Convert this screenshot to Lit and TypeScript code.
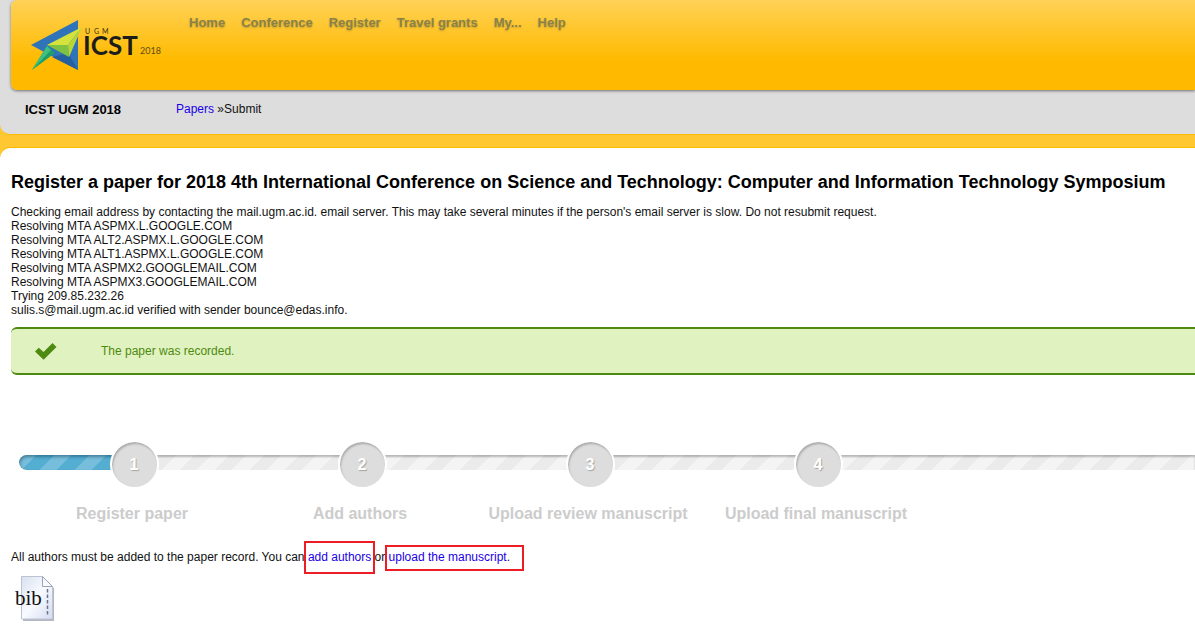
import { LitElement, html, css } from "lit";
import { customElement } from "lit/decorators.js";

const MENU = ["Home", "Conference", "Register", "Travel grants", "My...", "Help"];

const LOG = [
  "Checking email address by contacting the mail.ugm.ac.id. email server. This may take several minutes if the person's email server is slow. Do not resubmit request.",
  "Resolving MTA ASPMX.L.GOOGLE.COM",
  "Resolving MTA ALT2.ASPMX.L.GOOGLE.COM",
  "Resolving MTA ALT1.ASPMX.L.GOOGLE.COM",
  "Resolving MTA ASPMX2.GOOGLEMAIL.COM",
  "Resolving MTA ASPMX3.GOOGLEMAIL.COM",
  "Trying 209.85.232.26",
  "sulis.s@mail.ugm.ac.id verified with sender bounce@edas.info.",
];

const STEPS = ["Register paper", "Add authors", "Upload review manuscript", "Upload final manuscript"];

@customElement("site-header")
class SiteHeader extends LitElement {
  static styles = css`
    :host {
      display: block;
      background: #ddd;
      border-radius: 0 0 0 10px;
      border-bottom: 1px solid #ffba00;
    }
    .banner {
      display: flex;
      align-items: flex-start;
      min-height: 90px;
      margin-left: 11px;
      border-radius: 6px 0 0 6px;
      background: linear-gradient(#ffd257, #ffba00 60px);
      box-shadow: 0 1px 3px rgba(0, 0, 0, 0.5);
    }
    .logo {
      display: block;
      flex: none;
      width: 146px;
      height: 70px;
      margin: 10px 12px 0 9px;
    }
    .logo-name { font: 700 26px Lato, sans-serif; fill: #1d1d1b; }
    .logo-org { font: 400 7px Lato, sans-serif; fill: #3a2f10; }
    .logo-year { font: 400 9px Lato, sans-serif; fill: #5f4c10; }
    .menu {
      display: flex;
      gap: 16px;
      margin: 0 0 0 11px;
      padding: 15px 0 0;
      list-style: none;
      font-size: 13px;
      line-height: 16px;
      font-weight: bold;
    }
    .menu a {
      color: #8a8249;
      text-decoration: none;
      text-shadow: 0 1px 2px rgba(90, 80, 30, 0.35);
    }
    .trail {
      display: flex;
      padding: 11px 0 16px 25px;
      line-height: 16px;
    }
    .site {
      width: 151px;
      margin: 0;
      padding-top: 1px;
      color: #000;
      font-size: 13px;
      font-weight: bold;
    }
    .crumbs a { color: #1a00e8; text-decoration: none; }
  `;

  render() {
    return html`
      <div class="banner">
        <svg class="logo" viewBox="20 10 146 70" role="img" aria-label="UGM ICST 2018">
          <path fill="#2f74b8" d="M78 20v50L31 45z" />
          <path fill="#245f9f" d="M52 57l16-4 10 17z" />
          <path fill="#1c9f6b" d="M47 46l8 7-23 17z" />
          <path fill="#3fc080" d="M47 46l4 4-19 20z" />
          <path fill="#d6e23c" d="M47 45l35-18-14 18z" />
          <path fill="#7fc241" d="M47 45h21l1 12z" />
          <path fill="#b9d636" d="M82 27L68 45l1 12z" />
          <text class="logo-org" x="85" y="34">U</text>
          <text class="logo-org" x="94" y="34">G</text>
          <text class="logo-org" x="102" y="34">M</text>
          <text class="logo-name" x="83" y="55">ICST</text>
          <text class="logo-year" x="140" y="54">2018</text>
        </svg>
        <nav>
          <ul class="menu">
            ${MENU.map((item) => html`<li><a href="#">${item}</a></li>`)}
          </ul>
        </nav>
      </div>
      <div class="trail">
        <p class="site">ICST UGM 2018</p>
        <div class="crumbs"><a href="#">Papers</a> »Submit</div>
      </div>
    `;
  }
}

@customElement("step-progress")
class StepProgress extends LitElement {
  static styles = css`
    :host { display: block; }
    .wrap {
      display: grid;
      margin-left: 8px;
    }
    .track, .steps { grid-area: 1 / 1; }
    .steps {
      display: grid;
      grid-template-columns: repeat(4, 228px);
      margin: 0 0 0 1px;
      padding: 0;
      list-style: none;
      z-index: 1;
    }
    .track {
      height: 15px;
      margin-top: 15px;
      border-radius: 8px 0 0 8px;
      overflow: hidden;
      background: linear-gradient(135deg, #ebebeb 25%, #f4f4f4 25% 50%, #ebebeb 50% 75%, #f4f4f4 75%) 0 0 / 35px 35px;
      box-shadow: inset 0 2px 2px rgba(0, 0, 0, 0.25);
    }
    .fill {
      width: 114px;
      height: 100%;
      background: linear-gradient(135deg, #76bedb 25%, #53aed2 25% 50%, #76bedb 50% 75%, #53aed2 75%) 0 0 / 35px 35px;
      box-shadow: inset 1px 2px 3px rgba(0, 40, 60, 0.4);
      border-radius: 8px 0 0 8px;
    }
    .step {
      display: flex;
      flex-direction: column;
      align-items: center;
      font-size: 16px;
      line-height: 20px;
      font-weight: bold;
      color: #ccc;
    }
    .dot {
      box-sizing: border-box;
      width: 49px;
      height: 49px;
      border: 2px solid #fff;
      border-radius: 50%;
      background: #ddd;
      box-shadow: inset 1px 2px 2px rgba(0, 0, 0, 0.22);
      color: #fff;
      line-height: 45px;
      text-align: center;
      text-shadow: 1px 1px 1px rgba(0, 0, 0, 0.25);
    }
    .label { padding: 15px 4px 0 0; }
  `;

  render() {
    return html`
      <div class="wrap">
        <div class="track"><div class="fill"></div></div>
        <ol class="steps">
          ${STEPS.map(
            (label, i) => html`
              <li class="step">
                <span class="dot">${i + 1}</span>
                <span class="label">${label}</span>
              </li>
            `
          )}
        </ol>
      </div>
    `;
  }
}

@customElement("app-root")
class AppRoot extends LitElement {
  static styles = css`
    :host {
      display: block;
      min-height: 100vh;
      overflow: hidden;
      background: #ffc832;
      color: #111;
      font: 12px/14px "Liberation Sans", Arial, sans-serif;
    }
    .panel {
      box-sizing: border-box;
      min-height: calc(100vh - 148px);
      margin-top: 13px;
      padding: 23px 0 13px 11px;
      border-radius: 10px 0 0 0;
      background: #fff;
      box-shadow: 0 -1px 0 #ffba00;
    }
    h1 {
      margin: 0 0 12px;
      color: #000;
      font-size: 18px;
      line-height: 22px;
    }
    .log { margin: 0; padding: 0; list-style: none; }
    .notice {
      display: flex;
      align-items: center;
      box-sizing: border-box;
      min-height: 48px;
      margin: 10px 0 65px;
      padding-left: 24px;
      border: 2px solid #4f8a10;
      border-width: 2px 0;
      border-radius: 6px 0 0 6px;
      background: #dff2bf;
      color: #4f8a10;
    }
    .tick { width: 22px; height: 18px; margin-right: 44px; }
    .next { margin: 26px 0 12px; }
    a { color: #1a00e8; text-decoration: none; }
    .mark { position: relative; }
    .mark::after {
      content: "";
      position: absolute;
      inset: -9px -4px -10px;
      border: 2px solid #ee1c24;
      pointer-events: none;
    }
    .wide::after { inset: -5px -14px -7px -4px; }
    .bib { display: block; width: 48px; height: 46px; }
    .bib-name { font: 21px "Liberation Serif", serif; fill: #111; }
  `;

  render() {
    return html`
      <site-header></site-header>
      <main class="panel">
        <h1>
          Register a paper for 2018 4th International Conference on Science and Technology: Computer and
          Information Technology Symposium
        </h1>
        <ul class="log">
          ${LOG.map((line) => html`<li>${line}</li>`)}
        </ul>
        <div class="notice" role="status">
          <svg class="tick" viewBox="0 0 22 18" aria-hidden="true">
            <path fill="#4f8a10" d="M0 9.500l3.800-3.800 4.700 4.400L17.500 1 21.500 5 8.600 17.800z" />
          </svg>
          <span>The paper was recorded.</span>
        </div>
        <step-progress></step-progress>
        <p class="next">
          All authors must be added to the paper record. You can <a class="mark" href="#">add authors</a> or
          <span class="mark wide"><a href="#">upload the manuscript</a>.</span>
        </p>
        <a href="#" aria-label="BibTeX record">
          <svg class="bib" viewBox="0 0 48 46">
            <defs>
              <linearGradient id="sheet" x1="0" y1="0" x2="1" y2="1">
                <stop offset="0" stop-color="#d9e0f0" />
                <stop offset=".5" stop-color="#f8faff" />
                <stop offset="1" stop-color="#d3dcf0" />
              </linearGradient>
            </defs>
            <path fill="#b4b7c0" d="M12 3h21l10 9v33H12z" />
            <path fill="url(#sheet)" stroke="#bcc3d3" d="M10.500.500h21l10 10v32.500h-31z" />
            <path fill="#f8faff" stroke="#9aa2b6" d="M31.500.500v10h10z" />
            <path stroke="#6e7282" stroke-width="1.500" stroke-dasharray="3.500 2" d="M36.500 13v26" />
            <text class="bib-name" x="4" y="29">bib</text>
          </svg>
        </a>
      </main>
    `;
  }
}
